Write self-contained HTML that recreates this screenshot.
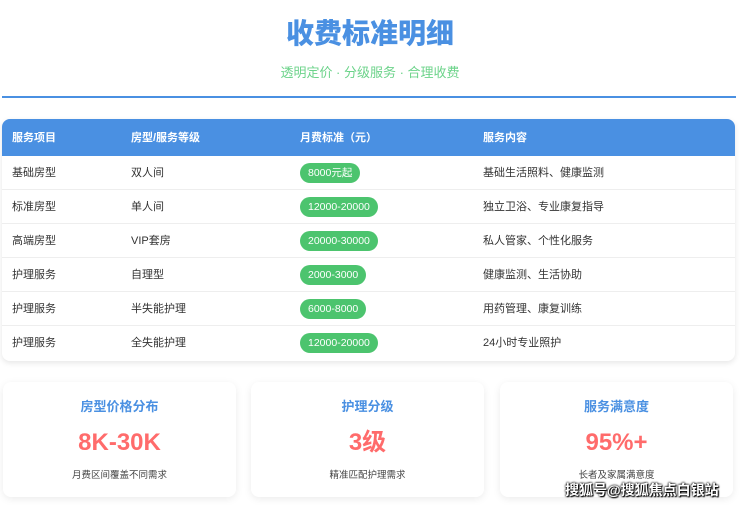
<!DOCTYPE html>
<html><head><meta charset="utf-8"><style>
body{margin:0;width:740px;height:505px;background:#fff;font-family:"Liberation Sans","Noto Sans CJK SC",sans-serif;position:relative;overflow:hidden}
h1{position:absolute;top:14px;left:0;width:740px;text-align:center;margin:0;font-size:28px;color:#4a90e2;font-weight:900;line-height:40px}
.sub{position:absolute;top:62px;width:740px;text-align:center;font-size:13px;color:#6cd38a}
.line{position:absolute;top:96px;left:2px;width:734px;height:2px;background:#4a90e2}
.tbl{position:absolute;top:119px;left:2px;width:733px;height:242px;border-radius:8px;box-shadow:0 2px 6px rgba(0,0,0,.1);overflow:hidden;background:#fff}
.row{position:relative;box-sizing:border-box;height:34px;border-bottom:1px solid #eee;font-size:11px;color:#333}
.row.h{height:37px;background:#4a90e2;color:#fff;font-weight:bold;border:none}
.row span{position:absolute;top:50%;transform:translateY(-50%);line-height:14px}
.c1{left:10px}.c2{left:129px}.c3{left:298px}.c4{left:481px}
.pill{background:#4cc46e;color:#fff;border-radius:10px;padding:3px 8px;font-size:10.5px}
.card{position:absolute;top:382px;height:115px;width:233px;border-radius:8px;box-shadow:0 2px 8px rgba(0,0,0,.08);background:#fff;text-align:center}
.card .t{position:absolute;top:15px;width:100%;font-size:13px;font-weight:bold;color:#4a90e2;line-height:20px}
.card .v{position:absolute;top:46px;width:100%;font-size:24px;font-weight:bold;color:#ff6b6b;line-height:30px}
.card .s{position:absolute;top:87px;width:100%;font-size:9.5px;color:#444;line-height:14px}
.wm{position:absolute;left:565px;top:480px;font-size:14px;color:#fff;font-weight:bold;text-shadow:0 0 2px #000,0 0 2px #000,1px 1px 1px #000}
</style></head><body>
<h1>收费标准明细</h1>
<div class="sub">透明定价 · 分级服务 · 合理收费</div>
<div class="line"></div>
<div class="tbl">
<div class="row h"><span class="c1">服务项目</span><span class="c2">房型/服务等级</span><span class="c3">月费标准（元）</span><span class="c4">服务内容</span></div>
<div class="row"><span class="c1">基础房型</span><span class="c2">双人间</span><span class="c3 pill">8000元起</span><span class="c4">基础生活照料、健康监测</span></div>
<div class="row"><span class="c1">标准房型</span><span class="c2">单人间</span><span class="c3 pill">12000-20000</span><span class="c4">独立卫浴、专业康复指导</span></div>
<div class="row"><span class="c1">高端房型</span><span class="c2">VIP套房</span><span class="c3 pill">20000-30000</span><span class="c4">私人管家、个性化服务</span></div>
<div class="row"><span class="c1">护理服务</span><span class="c2">自理型</span><span class="c3 pill">2000-3000</span><span class="c4">健康监测、生活协助</span></div>
<div class="row"><span class="c1">护理服务</span><span class="c2">半失能护理</span><span class="c3 pill">6000-8000</span><span class="c4">用药管理、康复训练</span></div>
<div class="row" style="border:none"><span class="c1">护理服务</span><span class="c2">全失能护理</span><span class="c3 pill">12000-20000</span><span class="c4">24小时专业照护</span></div>
</div>
<div class="card" style="left:3px"><div class="t">房型价格分布</div><div class="v">8K-30K</div><div class="s">月费区间覆盖不同需求</div></div>
<div class="card" style="left:251px"><div class="t">护理分级</div><div class="v">3级</div><div class="s">精准匹配护理需求</div></div>
<div class="card" style="left:500px"><div class="t">服务满意度</div><div class="v">95%+</div><div class="s">长者及家属满意度</div></div>
<div class="wm">搜狐号@搜狐焦点白银站</div>
</body></html>
